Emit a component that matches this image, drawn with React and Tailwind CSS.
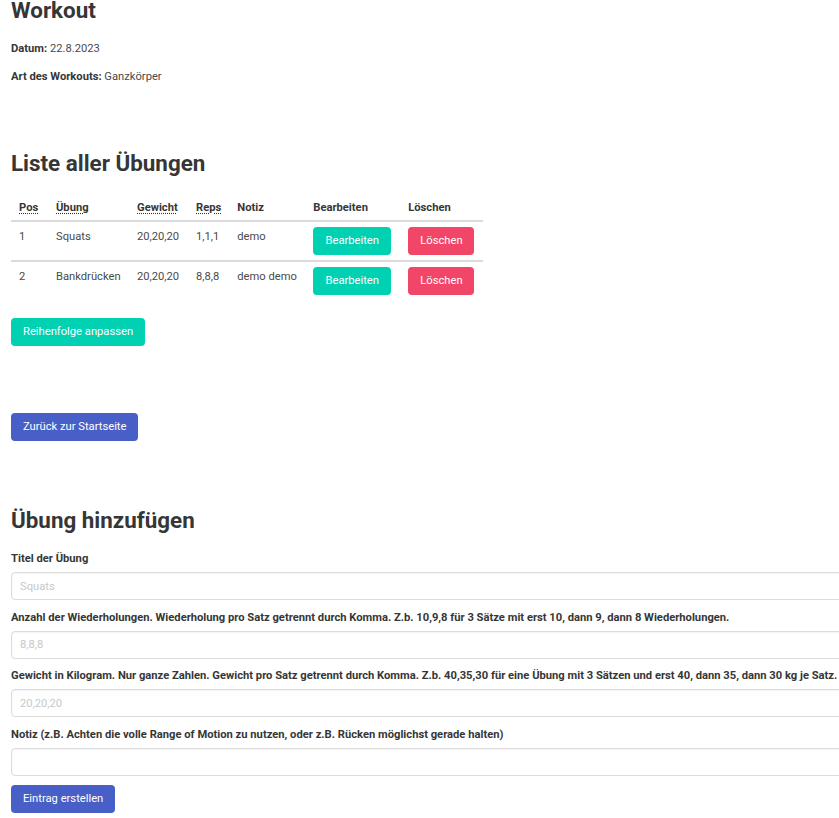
import React from 'react'

const rows = [
  { pos: 1, name: 'Squats', weight: '20,20,20', reps: '1,1,1', note: 'demo' },
  { pos: 2, name: 'Bankdrücken', weight: '20,20,20', reps: '8,8,8', note: 'demo demo' },
]

const fields = [
  { label: 'Titel der Übung', ph: 'Squats' },
  { label: 'Anzahl der Wiederholungen. Wiederholung pro Satz getrennt durch Komma. Z.b. 10,9,8 für 3 Sätze mit erst 10, dann 9, dann 8 Wiederholungen.', ph: '8,8,8' },
  { label: 'Gewicht in Kilogram. Nur ganze Zahlen. Gewicht pro Satz getrennt durch Komma. Z.b. 40,35,30 für eine Übung mit 3 Sätzen und erst 40, dann 35, dann 30 kg je Satz.', ph: '20,20,20' },
  { label: 'Notiz (z.B. Achten die volle Range of Motion zu nutzen, oder z.B. Rücken möglichst gerade halten)', ph: '' },
]

const btn = 'h-[28px] px-3 rounded-[4px] text-white text-[11.2px] leading-none'
const th = 'px-2 pt-[8px] pb-[4px] font-bold'
const td = 'px-2 pt-[7px] pb-[5px] align-top'

export default function App() {
  return (
    <div className="w-[839px] h-[818px] overflow-hidden bg-white text-[#4a4a4a] font-['Roboto',sans-serif]">
      <div className="pl-[11px] w-[880px]">
        <h1 className="-mt-[3px] text-[22.4px] leading-[27px] font-bold text-[#363636]">Workout</h1>
        <p className="mt-[16px] text-[11.2px] leading-[18px]"><b className="text-[#363636]">Datum:</b> 22.8.2023</p>
        <p className="mt-[10px] text-[11.2px] leading-[18px]"><b className="text-[#363636]">Art des Workouts:</b> Ganzkörper</p>

        <h2 className="mt-[64px] text-[22.4px] leading-[27px] font-bold text-[#363636]">Liste aller Übungen</h2>

        <table className="mt-[15px] text-[11.2px] leading-[16px] border-collapse">
          <thead>
            <tr className="text-left text-[#363636]">
              <th className={`w-[37px] ${th}`}><abbr className="underline decoration-dotted underline-offset-2">Pos</abbr></th>
              <th className={`w-[81px] ${th}`}><abbr className="underline decoration-dotted underline-offset-2">Übung</abbr></th>
              <th className={`w-[59px] ${th}`}><abbr className="underline decoration-dotted underline-offset-2">Gewicht</abbr></th>
              <th className={`w-[41px] ${th}`}><abbr className="underline decoration-dotted underline-offset-2">Reps</abbr></th>
              <th className={`w-[76px] ${th}`}>Notiz</th>
              <th className={`w-[95px] ${th}`}>Bearbeiten</th>
              <th className={`w-[83px] ${th}`}>Löschen</th>
            </tr>
          </thead>
          <tbody>
            {rows.map((r, i) => (
              <tr key={r.pos} className={i === 0 ? 'border-t-2 border-b-2 border-[#dbdbdb]' : ''}>
                <td className={td}>{r.pos}</td>
                <td className={td}>{r.name}</td>
                <td className={td}>{r.weight}</td>
                <td className={td}>{r.reps}</td>
                <td className={td}>{r.note}</td>
                <td className="px-2 pt-[5px] pb-[5px] align-top">
                  <button className={`${btn} w-[78px] bg-[#00d1b2]`}>Bearbeiten</button>
                </td>
                <td className="px-2 pt-[5px] pb-[5px] align-top">
                  <button className={`${btn} w-[66px] bg-[#f14668]`}>Löschen</button>
                </td>
              </tr>
            ))}
          </tbody>
        </table>

        <button className={`${btn} mt-[18px] block bg-[#00d1b2]`}>Reihenfolge anpassen</button>
        <button className={`${btn} mt-[67px] block bg-[#485fc7]`}>Zurück zur Startseite</button>

        <h2 className="mt-[66px] text-[22.4px] leading-[27px] font-bold text-[#363636]">Übung hinzufügen</h2>

        <div className="mt-[16px] flex flex-col">
          {fields.map((f, i) => (
            <div key={i} className="mb-[8.5px]">
              <label className="block text-[11.2px] leading-[18px] font-bold text-[#363636]">{f.label}</label>
              <input
                placeholder={f.ph}
                className="mt-[4px] block w-[860px] h-[28px] px-[8px] text-[11.2px] border border-[#dbdbdb] rounded-[4px] shadow-[inset_0_1px_2px_rgba(10,10,10,0.05)] placeholder:text-[#c8c8c8] outline-none"
              />
            </div>
          ))}
        </div>
        <button className={`${btn} mt-[1px] block bg-[#485fc7]`}>Eintrag erstellen</button>
      </div>
    </div>
  )
}
